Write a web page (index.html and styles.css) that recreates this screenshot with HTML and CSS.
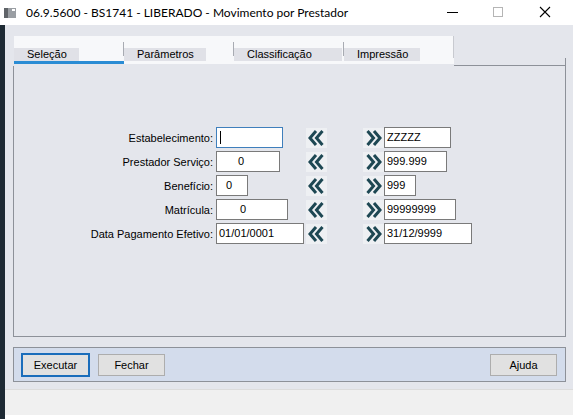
FILE: index.html
```html
<!DOCTYPE html>
<html lang="pt">
<head>
  <meta charset="UTF-8" />
  <title>06.9.5600 - BS1741 - LIBERADO - Movimento por Prestador</title>
  <link rel="stylesheet" href="styles.css">
</head>
<body>
  <div class="window">
    <div class="titlebar">
      <svg class="app-icon" width="12" height="10" viewBox="0 0 12 10">
        <rect x="0" y="0" width="12" height="10" fill="#9a9ea3"/>
        <rect x="0" y="0" width="4" height="10" fill="#5f6368"/>
        <rect x="8" y="1" width="3" height="2" fill="#ffffff"/>
      </svg>
      <span class="title">06.9.5600 - BS1741 - LIBERADO - Movimento por Prestador</span>
      <div class="controls">
        <svg width="46" height="25" viewBox="0 0 46 25"><line x1="17" y1="12.5" x2="28" y2="12.5" stroke="#000" stroke-width="1"/></svg>
        <svg width="46" height="25" viewBox="0 0 46 25"><rect x="17.5" y="7.5" width="9" height="9" fill="none" stroke="#b5b5b5" stroke-width="1"/></svg>
        <svg width="46" height="25" viewBox="0 0 46 25"><path d="M18 7 L28 17 M28 7 L18 17" stroke="#000" stroke-width="1.1"/></svg>
      </div>
    </div>

    <div class="frame">
      <div class="edge"></div>
      <div class="client">
        <div class="tabbar">
          <div class="tabs">
            <div class="tab active"><span class="tab-label">Seleção</span></div>
            <div class="tab sep"><span class="tab-label">Parâmetros</span></div>
            <div class="tab sep"><span class="tab-label wide">Classificação</span></div>
            <div class="tab sep last"><span class="tab-label">Impressão</span></div>
          </div>
          <div class="tabbar-fill"></div>
        </div>

        <div class="panel">
          <div class="form">
            <label class="lbl">Estabelecimento:</label>
            <div class="field focus w-estab"><span class="caret"></span></div>
            <button class="range-btn"><svg width="21" height="20" viewBox="0 0 21 20"><path d="M10 3 L4 10 L10 17 M16.5 3 L10.5 10 L16.5 17" fill="none" stroke="#1d4753" stroke-width="3"/></svg></button>
            <span></span>
            <button class="range-btn"><svg width="21" height="20" viewBox="0 0 21 20"><path d="M4.5 3 L10.5 10 L4.5 17 M11 3 L17 10 L11 17" fill="none" stroke="#1d4753" stroke-width="3"/></svg></button>
            <div class="field w-estab-ate">ZZZZZ</div>

            <label class="lbl">Prestador Serviço:</label>
            <div class="field w-prest ind-20">0</div>
            <button class="range-btn"><svg width="21" height="20" viewBox="0 0 21 20"><path d="M10 3 L4 10 L10 17 M16.5 3 L10.5 10 L16.5 17" fill="none" stroke="#1d4753" stroke-width="3"/></svg></button>
            <span></span>
            <button class="range-btn"><svg width="21" height="20" viewBox="0 0 21 20"><path d="M4.5 3 L10.5 10 L4.5 17 M11 3 L17 10 L11 17" fill="none" stroke="#1d4753" stroke-width="3"/></svg></button>
            <div class="field w-prest-ate">999.999</div>

            <label class="lbl">Benefício:</label>
            <div class="field w-benef ind-8">0</div>
            <button class="range-btn"><svg width="21" height="20" viewBox="0 0 21 20"><path d="M10 3 L4 10 L10 17 M16.5 3 L10.5 10 L16.5 17" fill="none" stroke="#1d4753" stroke-width="3"/></svg></button>
            <span></span>
            <button class="range-btn"><svg width="21" height="20" viewBox="0 0 21 20"><path d="M4.5 3 L10.5 10 L4.5 17 M11 3 L17 10 L11 17" fill="none" stroke="#1d4753" stroke-width="3"/></svg></button>
            <div class="field w-benef-ate">999</div>

            <label class="lbl">Matrícula:</label>
            <div class="field w-matr ind-22">0</div>
            <button class="range-btn"><svg width="21" height="20" viewBox="0 0 21 20"><path d="M10 3 L4 10 L10 17 M16.5 3 L10.5 10 L16.5 17" fill="none" stroke="#1d4753" stroke-width="3"/></svg></button>
            <span></span>
            <button class="range-btn"><svg width="21" height="20" viewBox="0 0 21 20"><path d="M4.5 3 L10.5 10 L4.5 17 M11 3 L17 10 L11 17" fill="none" stroke="#1d4753" stroke-width="3"/></svg></button>
            <div class="field w-matr-ate">99999999</div>

            <label class="lbl">Data Pagamento Efetivo:</label>
            <div class="field w-data">01/01/0001</div>
            <button class="range-btn"><svg width="21" height="20" viewBox="0 0 21 20"><path d="M10 3 L4 10 L10 17 M16.5 3 L10.5 10 L16.5 17" fill="none" stroke="#1d4753" stroke-width="3"/></svg></button>
            <span></span>
            <button class="range-btn"><svg width="21" height="20" viewBox="0 0 21 20"><path d="M4.5 3 L10.5 10 L4.5 17 M11 3 L17 10 L11 17" fill="none" stroke="#1d4753" stroke-width="3"/></svg></button>
            <div class="field w-data-ate">31/12/9999</div>
          </div>
        </div>

        <div class="buttonbar">
          <button class="btn default">Executar</button>
          <button class="btn">Fechar</button>
          <span class="spacer"></span>
          <button class="btn">Ajuda</button>
        </div>

        <div class="statusbar"></div>
      </div>
    </div>
  </div>
</body>
</html>
```

FILE: styles.css
```css
body {
  margin: 0;
  background: #ffffff;
  font-family: "Liberation Sans", Arial, sans-serif;
  font-size: 11px;
  color: #000;
}
.window {
  width: 579px;
  height: 419px;
  display: flex;
  flex-direction: column;
  overflow: hidden;
}

/* title bar */
.titlebar {
  height: 25px;
  display: flex;
  align-items: center;
  background: #ffffff;
  padding-left: 4px;
}
.app-icon {
  margin-right: 10px;
}
.title {
  font-family: Lato, "Liberation Sans", sans-serif;
  font-size: 12px;
  color: #000;
  flex: 1;
}
.controls {
  display: flex;
  margin-right: 11px;
}

/* window body */
.frame {
  flex: 1;
  display: flex;
  align-items: flex-start;
}
.edge {
  width: 5px;
  align-self: stretch;
  background: #1e2a34;
}
.client {
  width: 568px;
  height: 390px;
  box-sizing: border-box;
  background: #e4e6ec;
  padding: 11px 7px 0 8px;
  display: flex;
  flex-direction: column;
}

/* tabs */
.tabbar {
  display: flex;
  height: 30px;
}
.tabs {
  display: flex;
  margin-left: 1px;
  height: 28px;
}
.tab {
  width: 110px;
  height: 25px;
  background: #f7f8fa;
  position: relative;
  display: flex;
  align-items: flex-end;
  border-bottom: 3px solid transparent;
}
.tab.active {
  border-bottom-color: #2a8cd4;
}
.tab.sep::before {
  content: "";
  position: absolute;
  left: -1px;
  top: 6px;
  height: 14px;
  border-left: 1px solid #a8abb2;
}
.tab.last::after {
  content: "";
  position: absolute;
  right: 0;
  top: 0;
  height: 22px;
  border-right: 1px solid #c8cad0;
}
.tab-label {
  background: #e0e1e7;
  height: 13px;
  line-height: 12px;
  padding: 0 12px 0 13px;
}
.tab-label.wide {
  padding-right: 30px;
}
.tabbar-fill {
  flex: 1;
  border-bottom: 1px solid #8d9199;
  border-right: 1px solid #8d9199;
  margin-top: 22px;
}

/* form panel */
.panel {
  height: 271px;
  box-sizing: border-box;
  border: 1px solid #8d9199;
  border-top: none;
  padding-top: 61px;
}
.form {
  display: grid;
  grid-template-columns: 202px 90px 21px 36px 21px auto;
  grid-auto-rows: 21px;
  row-gap: 3px;
  align-items: center;
}
.lbl {
  text-align: right;
  padding-right: 3px;
}
.field {
  height: 21px;
  box-sizing: border-box;
  border: 1px solid #7a7a7a;
  background: #ffffff;
  line-height: 19px;
  padding-left: 2px;
  position: relative;
}
.field.focus {
  border-color: #3f7fbc;
}
.caret {
  position: absolute;
  left: 3px;
  top: 3px;
  height: 13px;
  border-left: 1px solid #000;
}
.w-estab { width: 67px; }
.w-prest { width: 64px; }
.w-benef { width: 32px; }
.w-matr { width: 72px; }
.w-data { width: 88px; }
.w-estab-ate { width: 67px; }
.w-prest-ate { width: 63px; }
.w-benef-ate { width: 32px; }
.w-matr-ate { width: 72px; }
.w-data-ate { width: 88px; }
.ind-20 { padding-left: 21px; }
.ind-8 { padding-left: 9px; }
.ind-22 { padding-left: 23px; }

.range-btn {
  width: 21px;
  height: 20px;
  padding: 0;
  border: none;
  background: #eef0f3;
  display: flex;
}

/* bottom buttons */
.buttonbar {
  margin-top: 10px;
  display: flex;
  align-items: center;
  box-sizing: border-box;
  height: 35px;
  border: 1px solid #8d9199;
  background: #d3dcec;
  padding: 0 8px 0 8px;
}
.btn {
  width: 67px;
  height: 22px;
  box-sizing: border-box;
  border: 1px solid #adadad;
  background: #e1e1e1;
  font-family: "Liberation Sans", Arial, sans-serif;
  font-size: 11px;
  color: #000;
  padding: 0;
  margin-right: 9px;
}
.btn.default {
  border-color: #1a6dbb;
  box-shadow: 0 0 0 1px #1a6dbb;
}
.spacer {
  flex: 1;
}
.buttonbar .btn:last-child {
  margin-right: 0;
}
.statusbar {
  margin-top: 7px;
  height: 25px;
  border-top: 1px solid #dcdcdc;
  background: #f0f0f0;
  margin-left: -8px;
  margin-right: -7px;
}
```
